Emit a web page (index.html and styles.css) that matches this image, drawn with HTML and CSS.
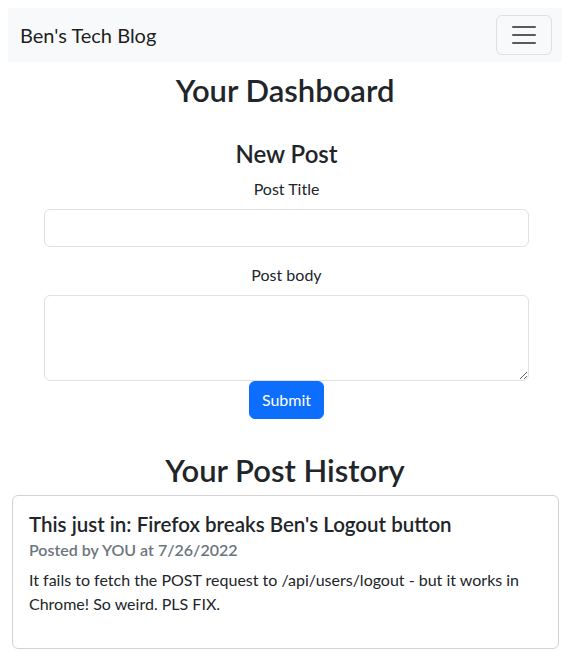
FILE: index.html
```html
<!DOCTYPE html>
<html lang="en">
<head>
<meta charset="utf-8">
<title>Ben's Tech Blog</title>
<link rel="stylesheet" href="styles.css">
</head>
<body>
<nav class="navbar">
  <a class="brand" href="#">Ben's Tech Blog</a>
  <button class="toggler" type="button" aria-label="Toggle navigation">
    <svg class="toggler-icon" viewBox="0 0 30 30" width="30" height="30"><path d="M4 7h22M4 15h22M4 23h22" stroke="rgba(33,37,41,0.75)" stroke-width="2" stroke-linecap="round" fill="none"/></svg>
  </button>
</nav>

<main class="main">
  <h1 class="page-title">Your Dashboard</h1>

  <form class="post-form">
    <h3 class="form-title">New Post</h3>
    <div class="field">
      <label class="label" for="title">Post Title</label>
      <input class="control" id="title" type="text">
    </div>
    <div class="field last">
      <label class="label" for="body">Post body</label>
      <textarea class="control area" id="body" rows="3"></textarea>
    </div>
    <div class="actions">
      <button class="btn-primary" type="submit">Submit</button>
    </div>
  </form>

  <h1 class="page-title history">Your Post History</h1>

  <div class="card">
    <div class="card-body">
      <h5 class="card-title">This just in: Firefox breaks Ben's Logout button</h5>
      <h6 class="card-subtitle">Posted by YOU at 7/26/2022</h6>
      <p class="card-text">It fails to fetch the POST request to /api/users/logout - but it works in Chrome! So weird. PLS FIX.</p>
    </div>
  </div>
</main>
</body>
</html>
```
FILE: styles.css
```css
* { box-sizing: border-box; }

body {
  margin: 8px;
  font-family: "Lato", "Open Sans", sans-serif;
  font-size: 16px;
  line-height: 1.5;
  color: #212529;
  background: #fff;
}

.navbar {
  display: flex;
  align-items: center;
  justify-content: space-between;
  padding: 7px 10px 7px 12px;
  background: #f8f9fa;
}

.brand {
  font-size: 20px;
  line-height: 30px;
  padding: 5px 0;
  color: rgba(0, 0, 0, 0.9);
  text-decoration: none;
}

.toggler {
  width: 56px;
  height: 40px;
  padding: 4px 12px;
  display: flex;
  align-items: center;
  justify-content: center;
  background: transparent;
  border: 1px solid rgba(0, 0, 0, 0.1);
  border-radius: 6px;
}

.toggler-icon { display: block; }

.main { display: flex; flex-direction: column; }

.page-title {
  margin: 10px 0 6px;
  font-size: 31px;
  font-weight: 600;
  line-height: 36px;
  text-align: center;
}

.page-title.history { margin: 33px 0 7px; }

.post-form {
  display: flex;
  flex-direction: column;
  padding: 0 33px 0 36px;
}

.form-title {
  margin: 26px 0 8px;
  font-size: 24px;
  font-weight: 600;
  line-height: 1.2;
  text-align: center;
}

.field { display: flex; flex-direction: column; margin-bottom: 16px; }
.field.last { margin-bottom: 0; }

.label {
  text-align: center;
  margin-bottom: 8px;
}

.control {
  display: block;
  width: 100%;
  height: 38px;
  padding: 6px 12px;
  font: inherit;
  color: #212529;
  background: #fff;
  border: 1px solid #dee2e6;
  border-radius: 6px;
}

.control.area {
  height: 86px;
  resize: vertical;
}

.actions { display: flex; justify-content: center; }

.btn-primary {
  padding: 6px 12px;
  height: 38px;
  font: inherit;
  color: #fff;
  background: #0d6efd;
  border: 1px solid #0d6efd;
  border-radius: 6px;
}

.card {
  margin: 0 3px 0 4px;
  border: 1px solid rgba(0, 0, 0, 0.175);
  border-radius: 6px;
}

.card-body { padding: 16px; }

.card-title {
  margin: 0 0 8px;
  font-size: 20.5px;
  font-weight: 600;
  line-height: 24px;
}

.card-subtitle {
  margin: -4px 0 9px;
  font-size: 16px;
  font-weight: 600;
  line-height: 1.2;
  color: #6c757d;
}

.card-text { margin: 0 0 16px; }
```
